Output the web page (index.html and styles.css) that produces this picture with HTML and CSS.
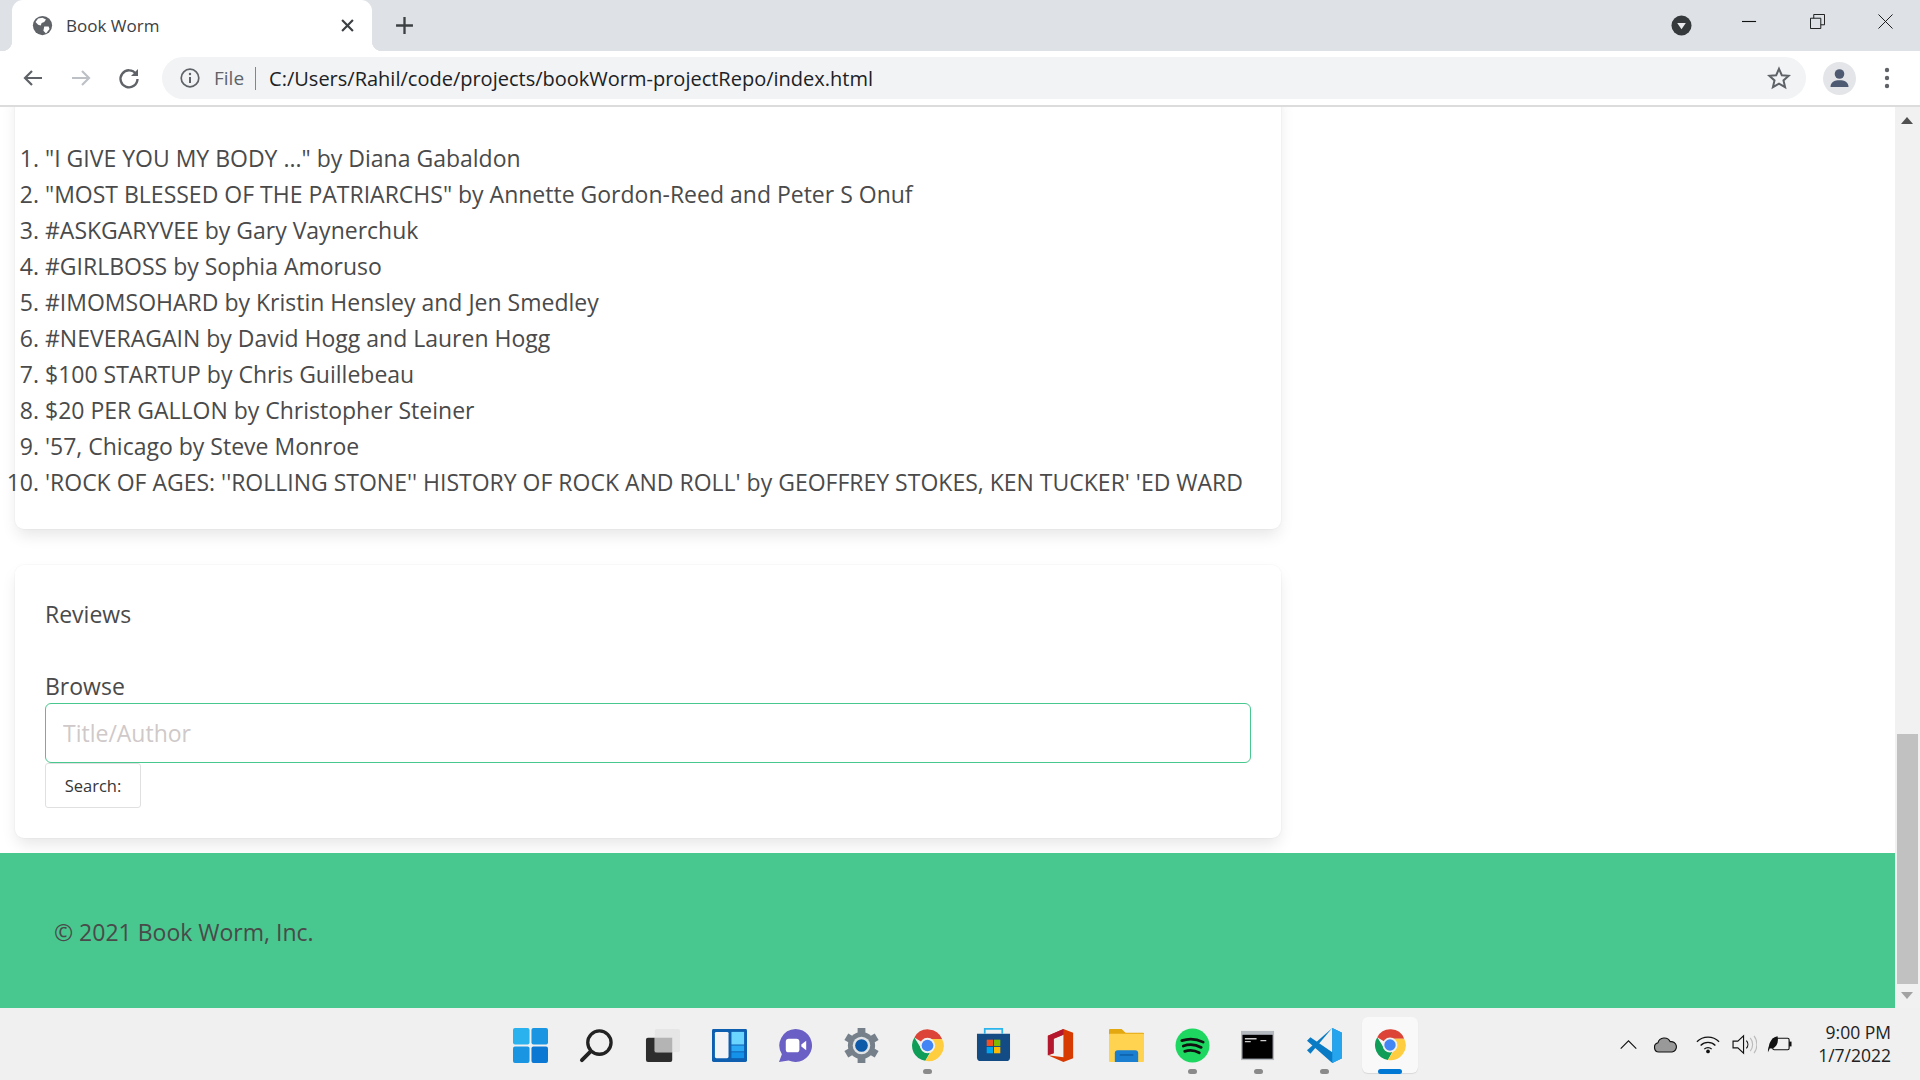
FILE: index.html
```html
<!DOCTYPE html>
<html lang="en">
<head>
<meta charset="utf-8">
<title>Book Worm</title>
<link rel="stylesheet" href="styles.css">
</head>
<body>
<svg class="defs" width="0" height="0" aria-hidden="true">
  <symbol id="chrome" viewBox="0 0 48 48">
    <path d="M24 24 L6 13 A21 21 0 0 1 44 15 L24 15 Z" fill="#db4437"/>
    <path d="M6 13 A21 21 0 0 0 21 45 L30 29 L24 33 A9 9 0 0 1 16 29 Z" fill="#0f9d58"/>
    <path d="M44 15 A21 21 0 0 1 21 45 L31 29 A9 9 0 0 0 24 15 Z" fill="#ffcd40"/>
    <circle cx="24" cy="24" r="10.5" fill="#f1f1f1"/>
    <circle cx="24" cy="24" r="8" fill="#4285f4"/>
  </symbol>
</svg>
<div class="window">
  <header class="tabstrip">
    <div class="tab">
      <svg class="favicon" viewBox="0 0 24 24"><circle cx="12" cy="12" r="11" fill="#5f6368"/><path d="M7 4l5-1 4 2-2 3-3 1-1 3-3-1-3-3zM14 13l5 0 1 3-4 5-3-3z" fill="#fff"/></svg>
      <span class="tab-title">Book Worm</span>
      <svg class="tab-close" viewBox="0 0 12 12"><path d="M1 1l10 10M11 1L1 11" stroke="#3c4043" stroke-width="2"/></svg>
    </div>
    <svg class="new-tab" viewBox="0 0 18 18"><path d="M9 1v16M1 9h16" stroke="#3c4043" stroke-width="2.2"/></svg>
    <div class="strip-space"></div>
    <svg class="tab-search" viewBox="0 0 22 22"><circle cx="11" cy="11" r="10.5" fill="#35393c"/><path d="M6.5 8.5h9L11 15z" fill="#e8eaed"/></svg>
    <div class="win-controls">
      <svg viewBox="0 0 16 16"><path d="M0 8h15" stroke="#111" stroke-width="1.2"/></svg>
      <svg viewBox="0 0 16 16"><path d="M.5 4.500h11v11H.5zM4 4.500V.5h11.500v11H11.500" fill="none" stroke="#111" stroke-width="1"/></svg>
      <svg viewBox="0 0 16 16"><path d="M.5.5l15 15M15.500.5l-15 15" stroke="#111" stroke-width="1"/></svg>
    </div>
  </header>

  <nav class="toolbar">
    <svg class="nav-icon" viewBox="0 0 24 24"><path d="M21 12H4M11 5l-7 7 7 7" fill="none" stroke="#5f6368" stroke-width="2.200"/></svg>
    <svg class="nav-icon" viewBox="0 0 24 24"><path d="M3 12h17M13 5l7 7-7 7" fill="none" stroke="#bdc1c6" stroke-width="2.200"/></svg>
    <svg class="nav-icon" viewBox="0 0 24 24"><path d="M19 8A8.500 8.500 0 1 0 20.500 13" fill="none" stroke="#5f6368" stroke-width="2.400"/><path d="M21 3v7h-7z" fill="#5f6368"/></svg>
    <div class="omnibox">
      <svg class="info" viewBox="0 0 20 20"><circle cx="10" cy="10" r="8.800" fill="none" stroke="#5f6368" stroke-width="1.700"/><path d="M10 9v6" stroke="#5f6368" stroke-width="2"/><circle cx="10" cy="6" r="1.200" fill="#5f6368"/></svg>
      <span class="scheme">File</span>
      <span class="sep"></span>
      <span class="url">C:/Users/Rahil/code/projects/bookWorm-projectRepo/index.html</span>
      <svg class="star" viewBox="0 0 24 24"><path d="M12 2.800l2.800 6.400 6.900.6-5.200 4.600 1.600 6.800-6.100-3.600-6.100 3.600 1.600-6.800-5.200-4.600 6.900-.6z" fill="none" stroke="#5f6368" stroke-width="2"/></svg>
    </div>
    <svg class="avatar" viewBox="0 0 33 33"><circle cx="16.500" cy="16.500" r="16.500" fill="#e3e5e8"/><circle cx="16.500" cy="12" r="4.800" fill="#4e5a71"/><path d="M7.500 25c0-5 4-6.800 9-6.800s9 1.800 9 6.800z" fill="#4e5a71"/></svg>
    <svg class="kebab" viewBox="0 0 6 22"><circle cx="3" cy="3" r="2.200" fill="#5f6368"/><circle cx="3" cy="11" r="2.200" fill="#5f6368"/><circle cx="3" cy="19" r="2.200" fill="#5f6368"/></svg>
  </nav>

  <div class="viewport">
    <main class="page">
      <div class="content">
        <section class="card card-list">
          <ol class="books">
            <li>"I GIVE YOU MY BODY ..." by Diana Gabaldon</li>
            <li>"MOST BLESSED OF THE PATRIARCHS" by Annette Gordon-Reed and Peter S Onuf</li>
            <li>#ASKGARYVEE by Gary Vaynerchuk</li>
            <li>#GIRLBOSS by Sophia Amoruso</li>
            <li>#IMOMSOHARD by Kristin Hensley and Jen Smedley</li>
            <li>#NEVERAGAIN by David Hogg and Lauren Hogg</li>
            <li>$100 STARTUP by Chris Guillebeau</li>
            <li>$20 PER GALLON by Christopher Steiner</li>
            <li>'57, Chicago by Steve Monroe</li>
            <li>'ROCK OF AGES: ''ROLLING STONE'' HISTORY OF ROCK AND ROLL' by GEOFFREY STOKES, KEN TUCKER' 'ED WARD</li>
          </ol>
        </section>
        <section class="card card-reviews">
          <h2 class="reviews-title">Reviews</h2>
          <label class="browse-label" for="q">Browse</label>
          <input class="search-input" id="q" type="text" placeholder="Title/Author">
          <button class="search-button" type="button">Search:</button>
        </section>
      </div>
      <footer class="site-footer">© 2021 Book Worm, Inc.</footer>
    </main>
    <aside class="scrollbar">
      <span class="arrow-up"></span>
      <span class="thumb"></span>
      <span class="arrow-down"></span>
    </aside>
  </div>

  <footer class="taskbar">
    <div class="apps">
      <div class="app"><svg viewBox="0 0 36 36"><rect x="0" y="0" width="17" height="17" rx="2" fill="#29b2ee"/><rect x="19" y="0" width="17" height="17" rx="2" fill="#1a95e2"/><rect x="0" y="19" width="17" height="17" rx="2" fill="#1a95e2"/><rect x="19" y="19" width="17" height="17" rx="2" fill="#0b78d4"/></svg></div>
      <div class="app"><svg viewBox="0 0 36 36"><circle cx="21" cy="15" r="12" fill="none" stroke="#222" stroke-width="3.400"/><path d="M12 24L3 33" stroke="#222" stroke-width="4" stroke-linecap="round"/></svg></div>
      <div class="app"><svg viewBox="0 0 36 36"><rect x="1" y="10" width="27" height="25" rx="2" fill="#2d2d2d"/><rect x="10" y="1" width="26" height="24" rx="2" fill="#e6e6e6"/><rect x="10" y="10" width="18" height="15" fill="#b4b4b4"/></svg></div>
      <div class="app"><svg viewBox="0 0 36 36"><rect width="36" height="34" y="1" rx="1.500" fill="#0f5fb0"/><rect x="3" y="4" width="14" height="27" rx="1.500" fill="#f4f4f6"/><rect x="20" y="4" width="13" height="13" fill="#6bd4ff"/><rect x="20" y="18" width="13" height="6" fill="#2aa8f4"/><rect x="20" y="25" width="13" height="6" fill="#1492ea"/></svg></div>
      <div class="app"><svg viewBox="0 0 36 36"><path d="M18 1a17 17 0 1 1-7 32.500L1 35l3-8A17 17 0 0 1 18 1z" fill="#6a5fc4"/><rect x="8" y="11" width="14" height="14" rx="3" fill="#fff"/><path d="M24 17l5-4v10l-5-4z" fill="#fff"/></svg></div>
      <div class="app"><svg viewBox="0 0 36 36"><circle cx="18" cy="18" r="14" fill="#76808a"/><path d="M18 0v36M2.400 9l31.200 18M2.400 27l31.200-18" stroke="#76808a" stroke-width="8"/><circle cx="18" cy="18" r="9" fill="#dfe3e6"/><circle cx="18" cy="18" r="6.500" fill="#0f5aa8"/></svg></div>
      <div class="app running"><svg viewBox="0 0 36 36"><use href="#chrome"/></svg></div>
      <div class="app"><svg viewBox="0 0 36 36"><path d="M1 6h34v24a4 4 0 0 1-4 4H5a4 4 0 0 1-4-4z" fill="#134b85"/><path d="M9 6V1h18v5" fill="none" stroke="#2bb5ec" stroke-width="1.800"/><rect x="11" y="12" width="6.500" height="6.500" fill="#f25022"/><rect x="18.500" y="12" width="6.500" height="6.500" fill="#7fba00"/><rect x="11" y="19.500" width="6.500" height="6.500" fill="#00a4ef"/><rect x="18.500" y="19.500" width="6.500" height="6.500" fill="#ffb900"/></svg></div>
      <div class="app"><svg viewBox="0 0 36 36"><path d="M5 8L21 1l10 4v26l-10 4L5 28l16 2V7l-10 4v15l-6 2z" fill="#d83b01"/><path d="M5 8L21 1v6l-10 4v15l-6 2z" fill="#b3182f"/></svg></div>
      <div class="app"><svg viewBox="0 0 36 36"><path d="M0 2a1 1 0 0 1 1-1h12l4 4h18a1 1 0 0 1 1 1v4H0z" fill="#e3a710"/><rect y="6" width="36" height="29" rx="1" fill="#ffd350"/><path d="M6 35v-9a3 3 0 0 1 3-3h18a3 3 0 0 1 3 3v9z" fill="#1a7fd0"/><rect x="11" y="27" width="14" height="1.500" fill="#0e5ea6"/></svg></div>
      <div class="app running"><svg viewBox="0 0 36 36"><circle cx="18" cy="18" r="17.500" fill="#1ed760"/><path d="M7 13c7-2.500 15-2 22 1.500M8.500 18.500c6-2 13-1.500 18.500 1.500M10 24c5-1.500 10.500-1 15 1.500" fill="none" stroke="#111" stroke-width="2.800" stroke-linecap="round"/></svg></div>
      <div class="app running"><svg viewBox="0 0 36 36"><rect y="3" width="34" height="30" fill="#b4b9c0"/><rect x="1.500" y="7" width="31" height="24.500" fill="#000"/><path d="M4 11h12M4 14h6M20 13h6" stroke="#ccc" stroke-width="1.500"/></svg></div>
      <div class="app running"><svg viewBox="0 0 36 36"><path d="M26 0l10 5v26l-10 5L0 13l3.500-3.500L26 25z" fill="#0a7cc5"/><path d="M26 0L3.500 26.500 0 23l26-23z" fill="#0a7cc5"/><path d="M26 0l10 5v26l-10 5z" fill="#25a5ee"/></svg></div>
      <div class="app active"><svg viewBox="0 0 36 36"><use href="#chrome"/></svg></div>
    </div>
    <div class="tray">
      <svg class="tray-chevron" viewBox="0 0 20 12"><path d="M1.500 10.500L10 2l8.500 8.500" fill="none" stroke="#111" stroke-width="1.200"/></svg>
      <svg class="tray-cloud" viewBox="0 0 26 18"><path d="M6 17a5 5 0 0 1-1-9.800A7 7 0 0 1 18 6a5.500 5.500 0 0 1 2 11z" fill="#999" stroke="#111" stroke-width="1.200"/></svg>
      <svg class="tray-wifi" viewBox="0 0 26 20"><path d="M1 7a17 17 0 0 1 24 0M5 11a11.500 11.500 0 0 1 16 0M9 15a5.500 5.500 0 0 1 8 0" fill="none" stroke="#111" stroke-width="1.400"/><circle cx="13" cy="17.500" r="2" fill="#111"/></svg>
      <svg class="tray-sound" viewBox="0 0 26 22"><path d="M1 7.500h5l6-5.500v18l-6-5.500H1z" fill="none" stroke="#111" stroke-width="1.200"/><path d="M15 7a6 6 0 0 1 0 8" fill="none" stroke="#111" stroke-width="1.200"/><path d="M19 4a11 11 0 0 1 0 14M23 2a15 15 0 0 1 0 18" fill="none" stroke="#bbb" stroke-width="1.200"/></svg>
      <svg class="tray-battery" viewBox="0 0 26 18"><rect x="6" y="3" width="17" height="12" rx="1.500" fill="none" stroke="#111" stroke-width="1.200"/><rect x="23" y="6.500" width="2.500" height="5" fill="#111"/><path d="M1 17.500C1 15 1 14 2 11 3 6 6 2 11 1c1 5 0 9-3 11.500-2 1.500-3.500 1.500-5 1z" fill="#111"/></svg>
      <div class="clock"><span>9:00 PM</span><span>1/7/2022</span></div>
    </div>
  </footer>
</div>
</body>
</html>
```

FILE: styles.css
```css
* { box-sizing: border-box; }
html, body { margin: 0; height: 100%; overflow: hidden; }
body { font-family: "Open Sans", "Noto Sans", sans-serif; color: #4a4a4a; background: #fff; }
svg { display: block; flex: none; }
.defs { position: absolute; }

.window { width: 1920px; height: 1080px; display: flex; flex-direction: column; overflow: hidden; }

/* Tab strip */
.tabstrip { height: 51px; flex: none; background: #dee1e6; display: flex; align-items: center; }
.tab { position: relative; align-self: stretch; width: 360px; margin-left: 12px; background: #fff; border-radius: 11px 11px 0 0; display: flex; align-items: center; padding: 0 18px 0 20px; }
.tab::before, .tab::after { content: ""; position: absolute; bottom: 0; width: 10px; height: 10px; }
.tab::before { left: -10px; background: radial-gradient(circle at 0 0, #dee1e6 10px, #fff 10.500px); }
.tab::after { right: -10px; background: radial-gradient(circle at 100% 0, #dee1e6 10px, #fff 10.500px); }
.favicon { width: 21px; height: 21px; }
.tab-title { margin-left: 13px; font-size: 17px; color: #3c4043; flex: 1; }
.tab-close { width: 13px; height: 13px; }
.new-tab { width: 19px; height: 19px; margin-left: 23px; }
.strip-space { flex: 1; }
.tab-search { width: 21px; height: 21px; margin-right: 50px; margin-top: -1px; }
.win-controls { display: flex; align-items: center; gap: 53px; margin-right: 27px; margin-top: -9px; }
.win-controls svg { width: 15px; height: 15px; }

/* Toolbar */
.toolbar { height: 56px; flex: none; background: #fff; border-bottom: 2px solid #dcdcdc; display: flex; align-items: center; padding-left: 21px; }
.nav-icon { width: 24px; height: 24px; margin-right: 24px; }
.omnibox { width: 1644px; height: 42px; margin-left: -3px; background: #f1f3f4; border-radius: 21px; display: flex; align-items: center; padding: 0 0 0 18px; }
.info { width: 20px; height: 20px; }
.scheme { margin-left: 14px; font-size: 19px; color: #5f6368; }
.sep { width: 1px; height: 23px; background: #80868b; margin-left: 11px; }
.url { margin-left: 13px; font-size: 20px; color: #202124; flex: 1; }
.star { width: 24px; height: 24px; margin-right: 15px; }
.avatar { width: 33px; height: 33px; margin-left: 17px; }
.kebab { width: 6px; height: 22px; margin-left: 28px; }

/* Page */
.viewport { flex: 1; min-height: 0; display: flex; }
.page { flex: 1; min-width: 0; display: flex; flex-direction: column; overflow: hidden; justify-content: flex-end; }
.content { flex: 1; padding: 0 614px 15px 15px; display: flex; flex-direction: column; gap: 36px; justify-content: flex-end; }
.card { background: #fff; border-radius: 9px; box-shadow: 0 8px 16px -2px rgba(10,10,10,.1), 0 0 0 1px rgba(10,10,10,.02); padding: 30px; }
.card-list { flex: 1; margin-top: -20px; display: flex; flex-direction: column; justify-content: flex-end; padding-top: 0; padding-bottom: 29px; }
.books { margin: 0; padding: 0; font-size: 23px; line-height: 36px; }
.card-reviews { height: 273px; padding-top: 31px; display: flex; flex-direction: column; align-items: flex-start; }
.reviews-title { margin: 0; font-size: 23px; line-height: 36px; font-weight: 400; }
.browse-label { margin-top: 36px; margin-bottom: -1px; font-size: 23px; line-height: 36px; }
.search-input { width: 100%; height: 60px; flex: none; border: 1.500px solid #48c78e; border-radius: 6px; padding: 0 17px; font: inherit; font-size: 23px; color: #363636; background: #fff; outline: 0; }
.search-input::placeholder { color: #cfc9c9; opacity: 1; }
.search-button { width: 96px; height: 45px; flex: none; border: 1px solid #e0e0e0; border-radius: 3px; background: #fff; font: inherit; font-size: 16.500px; color: #363636; padding: 0; }
.site-footer { height: 155px; flex: none; background: #48c78e; display: flex; align-items: center; padding-left: 54px; padding-top: 3px; font-size: 23px; color: #4a4a4a; }

/* Scrollbar */
.scrollbar { position: relative; width: 25px; flex: none; background: #f1f1f1; }
.arrow-up, .arrow-down { position: absolute; left: 6px; width: 0; height: 0; border-left: 6px solid transparent; border-right: 6px solid transparent; }
.arrow-up { top: 10px; border-bottom: 7px solid #505050; }
.arrow-down { bottom: 9px; border-top: 7px solid #a3a3a3; }
.thumb { position: absolute; left: 2px; right: 2px; top: 627px; height: 250px; background: #c1c1c1; }

/* Taskbar */
.taskbar { height: 72px; flex: none; background: #f0f0f0; display: flex; align-items: center; padding-left: 497.500px; padding-right: 29px; }
.apps { display: flex; align-items: center; }
.app { position: relative; width: 66.200px; height: 72px; display: flex; align-items: center; justify-content: center; padding-top: 2px; }
.app svg { width: 35px; height: 35px; }
.app.running::after, .app.active::after { content: ""; position: absolute; left: 50%; top: 61px; width: 9px; height: 5px; margin-left: -4.500px; border-radius: 3px; background: #8a8a8a; }
.app.active::before { content: ""; position: absolute; left: 4px; right: 6px; top: 9px; height: 56px; border-radius: 6px; background: #f9f9f9; box-shadow: 0 1px 1px rgba(0,0,0,.1); }
.app.active svg { position: relative; left: -1px; width: 34px; height: 34px; }
.app.active::after { width: 24px; margin-left: -13px; background: #0078d4; z-index: 1; }
.tray { flex: 1; display: flex; align-items: center; }
.tray-chevron { width: 19px; height: 11px; margin-left: 194.500px; }
.tray-cloud { width: 25px; height: 17px; margin-left: 15px; }
.tray-wifi { width: 24px; height: 19px; margin-left: 18px; }
.tray-sound { width: 25px; height: 21px; margin-left: 12px; }
.tray-battery { width: 25px; height: 18px; margin-left: 10px; }
.clock { margin-left: auto; display: flex; flex-direction: column; align-items: flex-end; font-size: 17.500px; line-height: 23px; color: #222; }
```
